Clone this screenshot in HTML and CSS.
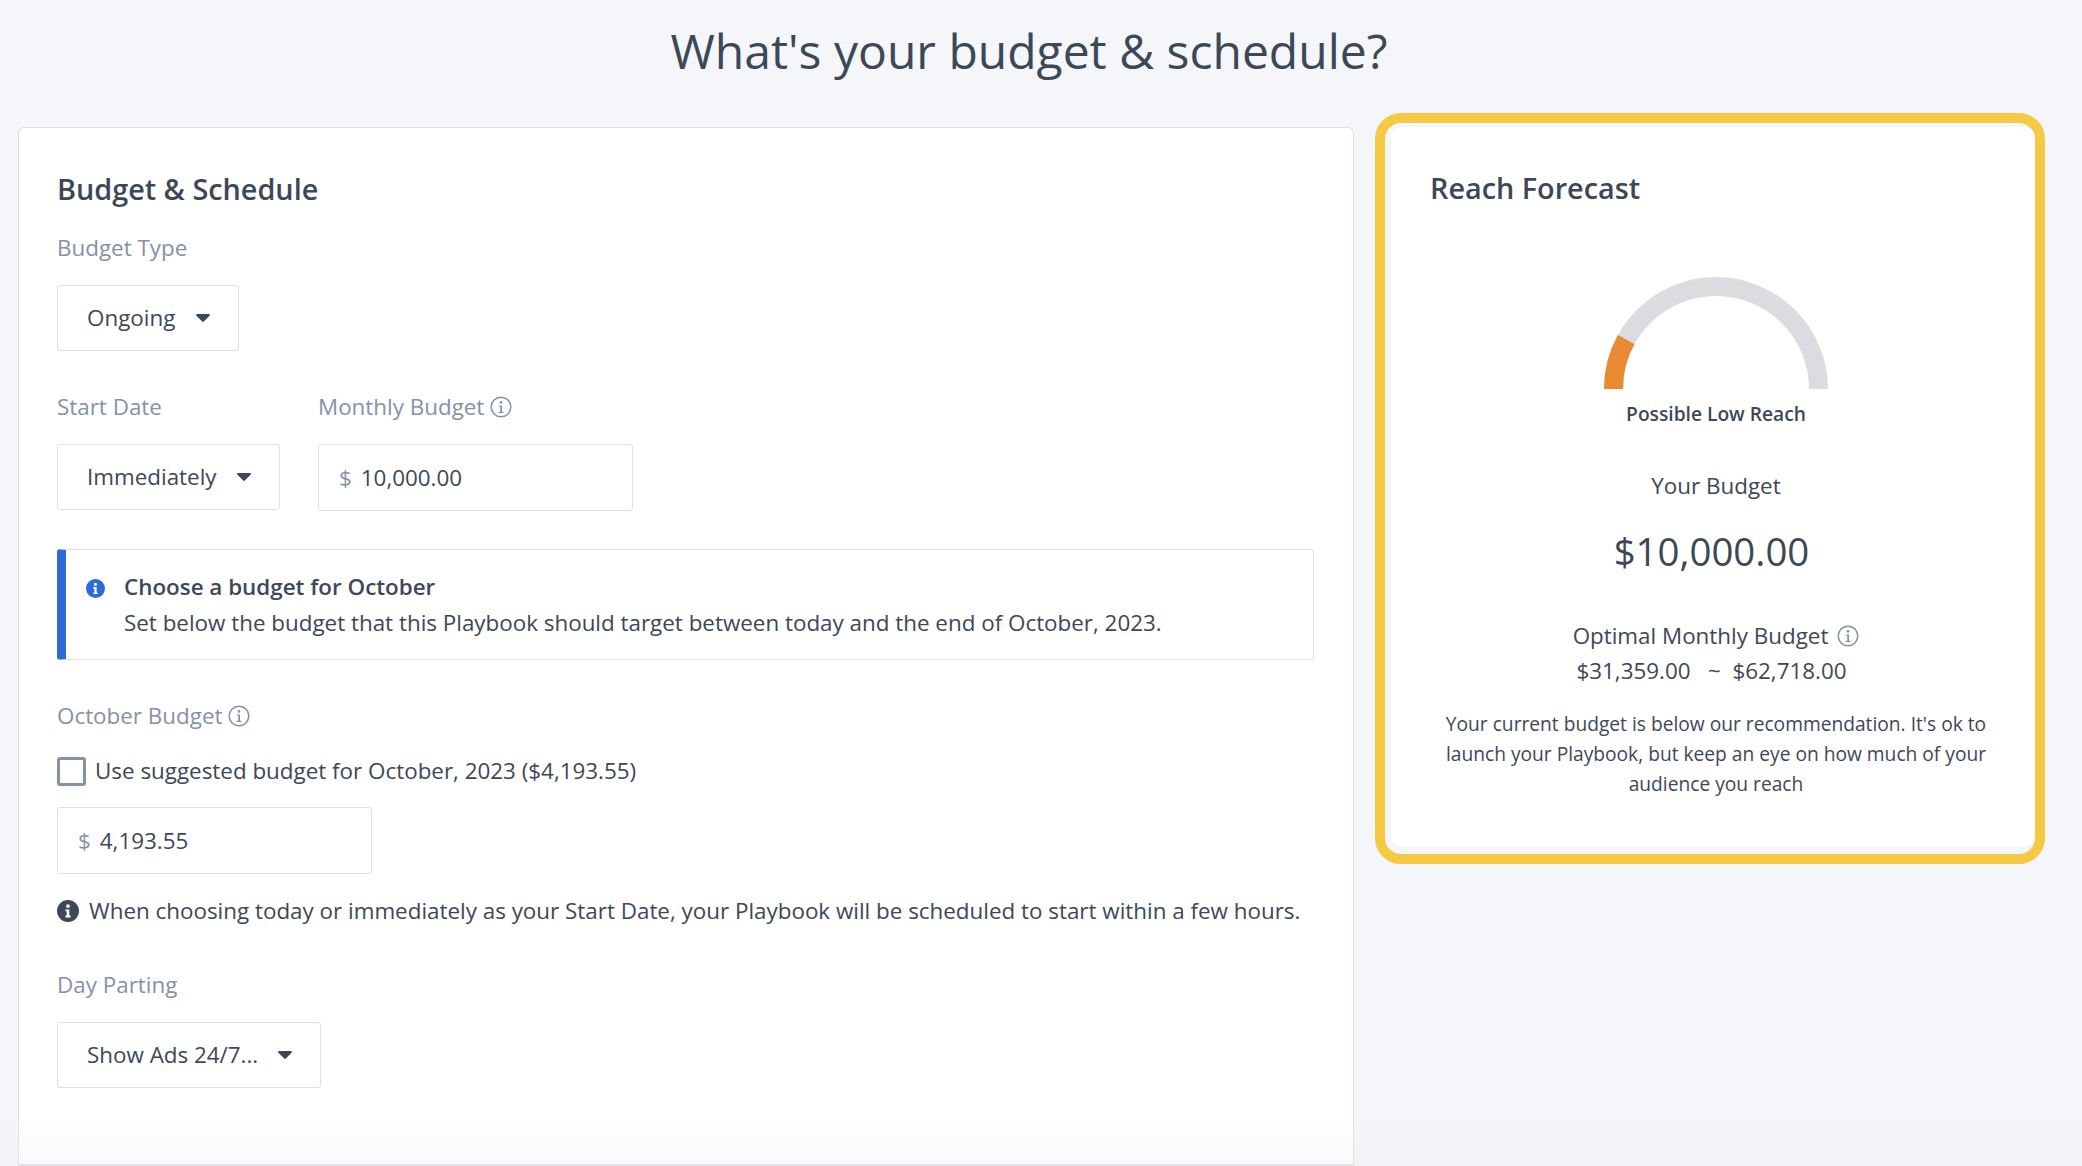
FILE: index.html
```html
<!DOCTYPE html>
<html lang="en">
<head>
    <meta charset="UTF-8">
    <meta name="viewport" content="width=device-width, initial-scale=1.0">
    <title>Budget &amp; Schedule</title>
    <link rel="stylesheet" href="styles.css">
</head>
<body>
    <svg class="icon-defs" width="0" height="0" aria-hidden="true">
        <symbol id="info-outline" viewBox="0 0 22 22">
            <circle cx="11" cy="11" r="9.8" fill="none" stroke="currentColor" stroke-width="1.5"/>
            <circle cx="11" cy="6.4" r="1.3" fill="currentColor"/>
            <path d="M8.8 9.4h3.2v6.4h1.6v1.2H8.6v-1.2h1.7v-5.2H8.8z" fill="currentColor"/>
        </symbol>
        <symbol id="info-solid" viewBox="0 0 22 22">
            <path fill-rule="evenodd" fill="currentColor" d="M11 0a11 11 0 1 1 0 22a11 11 0 0 1 0-22zM11 4.2a1.9 1.9 0 1 0 0 3.8a1.9 1.9 0 0 0 0-3.8zM8.4 9.4v1.8h1.3v4.4H8.4v1.9h5.2v-1.9h-1.3V9.4z"/>
        </symbol>
        <symbol id="caret" viewBox="0 0 14 8">
            <path d="M1.2 0h11.6c1 0 1.5 1.1.8 1.8L7.8 7.6c-.4.4-1.2.4-1.6 0L.4 1.8C-.3 1.1.2 0 1.2 0z" fill="currentColor"/>
        </symbol>
    </svg>

    <h1 class="page-title">What's your budget &amp; schedule?</h1>

    <div class="layout">
        <form class="card">
            <h2>Budget &amp; Schedule</h2>

            <div class="form-group group-type">
                <label>Budget Type</label>
                <button type="button" class="select select-type">
                    <span>Ongoing</span>
                    <svg class="caret"><use href="#caret"/></svg>
                </button>
            </div>

            <div class="form-row">
                <div class="form-group">
                    <label>Start Date</label>
                    <button type="button" class="select select-date">
                        <span>Immediately</span>
                        <svg class="caret"><use href="#caret"/></svg>
                    </button>
                </div>
                <div class="form-group">
                    <label>Monthly Budget <svg class="info"><use href="#info-outline"/></svg></label>
                    <div class="money">
                        <span class="currency">$</span>
                        <input type="text" value="10,000.00">
                    </div>
                </div>
            </div>

            <div class="alert">
                <svg class="alert-icon"><use href="#info-solid"/></svg>
                <div>
                    <strong>Choose a budget for October</strong>
                    <p>Set below the budget that this Playbook should target between today and the end of October, 2023.</p>
                </div>
            </div>

            <div class="form-group group-october">
                <label>October Budget <svg class="info"><use href="#info-outline"/></svg></label>
                <div class="check-row">
                    <span class="checkbox"></span>
                    <span>Use suggested budget for October, 2023 ($4,193.55)</span>
                </div>
                <div class="money">
                    <span class="currency">$</span>
                    <input type="text" value="4,193.55">
                </div>
            </div>

            <div class="note">
                <svg class="note-icon"><use href="#info-solid"/></svg>
                <span>When choosing today or immediately as your Start Date, your Playbook will be scheduled to start within a few hours.</span>
            </div>

            <div class="form-group group-parting">
                <label>Day Parting</label>
                <button type="button" class="select select-parting">
                    <span>Show Ads 24/7...</span>
                    <svg class="caret"><use href="#caret"/></svg>
                </button>
            </div>
        </form>

        <aside class="forecast">
            <div class="forecast-card">
                <h2>Reach Forecast</h2>
                <svg class="gauge" width="224" height="112" viewBox="0 0 224 112">
                    <path d="M9.5 112a102.5 102.5 0 0 1 205 0" fill="none" stroke="#dbdce0" stroke-width="19"/>
                    <path d="M9.5 112a102.5 102.5 0 0 1 12.7-49.5" fill="none" stroke="#ea8b33" stroke-width="19"/>
                </svg>
                <div class="gauge-label">Possible Low Reach</div>
                <div class="your-budget">Your Budget</div>
                <div class="budget-value">$10,000.00</div>
                <div class="optimal">Optimal Monthly Budget <svg class="info"><use href="#info-outline"/></svg></div>
                <div class="optimal-range">$31,359.00 &nbsp; ~ &nbsp;$62,718.00</div>
                <p class="forecast-note">Your current budget is below our recommendation. It's ok to launch your Playbook, but keep an eye on how much of your audience you reach</p>
            </div>
        </aside>
    </div>

    <div class="bottom-fade"></div>
</body>
</html>
```

FILE: styles.css
```css
* {
    box-sizing: border-box;
}
html, body {
    height: 1166px;
}
body {
    margin: 0;
    overflow: hidden;
    position: relative;
    background: #f4f6fa;
    color: #3c4858;
    font-family: 'Open Sans', 'Noto Sans', sans-serif;
    font-size: 22.4px;
    line-height: 30px;
}
.icon-defs {
    position: absolute;
}
.page-title {
    height: 113px;
    margin: 0;
    padding: 17px 24px 0 0;
    text-align: center;
    font-size: 48px;
    font-weight: 400;
    line-height: 68px;
}
.layout {
    display: flex;
    align-items: flex-start;
    padding-left: 18px;
}
.card {
    width: 1336px;
    height: 1039px;
    margin-top: 14px;
    padding: 41px 39px 0 38px;
    background: #fff;
    border: 1px solid #dcdfe3;
    border-bottom-width: 2px;
    border-radius: 6px 6px 0 0;

    h2 {
        margin: 0;
        font-size: 28.8px;
        font-weight: 600;
        line-height: 40px;
    }
}
.form-group {
    label {
        display: flex;
        align-items: center;
        gap: 6px;
        margin-bottom: 22px;
        color: #8492a6;
    }
}
.group-type {
    margin-top: 24px;
}
.form-row {
    display: flex;
    gap: 38px;
    margin-top: 41px;
}
.select {
    display: flex;
    align-items: center;
    justify-content: space-between;
    height: 66px;
    padding: 0 28px 0 29px;
    background: #fff;
    border: 1px solid #dcdfe3;
    border-radius: 3px;
    color: inherit;
    font: inherit;
}
.select-type {
    width: 182px;
}
.select-date {
    width: 223px;
}
.select-parting {
    width: 264px;
}
.caret {
    width: 14px;
    height: 8px;
    flex: none;
}
.info {
    width: 22px;
    height: 22px;
    flex: none;
    color: #8492a6;
}
.money {
    display: flex;
    align-items: center;
    width: 315px;
    height: 67px;
    padding: 0 20px;
    background: #fff;
    border: 1px solid #dcdfe3;
    border-radius: 3px;

    .currency {
        margin-right: 9px;
        color: #8492a6;
    }
    input {
        width: 100%;
        min-width: 0;
        padding: 0;
        border: 0;
        outline: 0;
        color: inherit;
        font: inherit;
    }
}
.alert {
    display: flex;
    gap: 19px;
    height: 111px;
    margin-top: 38px;
    padding: 19px 20px 0 20px;
    border: 1px solid #dcdfe3;
    border-left: 9px solid #2f6bd8;
    border-radius: 3px;

    strong {
        display: block;
        font-weight: 600;
        line-height: 36px;
    }
    p {
        margin: 0;
        line-height: 36px;
    }
}
.alert-icon {
    width: 19px;
    height: 19px;
    flex: none;
    margin-top: 10px;
    color: #2f6bd8;
}
.group-october {
    margin-top: 41px;

    label {
        margin-bottom: 25px;
    }
}
.check-row {
    display: flex;
    align-items: center;
    gap: 9px;
    margin-bottom: 21px;
}
.checkbox {
    width: 29px;
    height: 29px;
    flex: none;
    border: 3px solid #8492a6;
    border-radius: 3px;
}
.note {
    display: flex;
    align-items: center;
    gap: 10px;
    margin-top: 22px;
    white-space: nowrap;
}
.note-icon {
    width: 22px;
    height: 22px;
    flex: none;
}
.group-parting {
    margin-top: 44px;
}
.forecast {
    width: 670px;
    height: 751px;
    margin-left: 21px;
    padding: 4px 0 7px 6px;
    border: 10px solid #f6c945;
    border-radius: 26px;
}
.forecast-card {
    height: 100%;
    padding: 41px 37px 0 43px;
    background: #fff;
    border-radius: 10px;
    text-align: center;

    h2 {
        margin: 0 0 0 -4px;
        font-size: 28.8px;
        font-weight: 600;
        line-height: 40px;
        text-align: left;
    }
}
.gauge {
    display: block;
    margin: 69px auto 0;
}
.gauge-label {
    margin-top: 11px;
    font-size: 19.2px;
    font-weight: 600;
    line-height: 28px;
}
.your-budget {
    margin-top: 43px;
}
.budget-value {
    margin-top: 24px;
    margin-right: 9px;
    font-size: 38.4px;
    line-height: 52px;
}
.optimal {
    display: flex;
    align-items: center;
    justify-content: center;
    gap: 9px;
    margin-top: 44px;
}
.optimal-range {
    margin-top: 5px;
    margin-right: 9px;
}
.forecast-note {
    margin: 23px -6px 0;
    font-size: 19.2px;
    line-height: 30px;
}
.bottom-fade {
    position: absolute;
    left: 0;
    right: 0;
    bottom: 0;
    height: 50px;
    background: linear-gradient(rgba(236, 238, 240, 0), rgba(236, 238, 240, .35));
    pointer-events: none;
}
```
